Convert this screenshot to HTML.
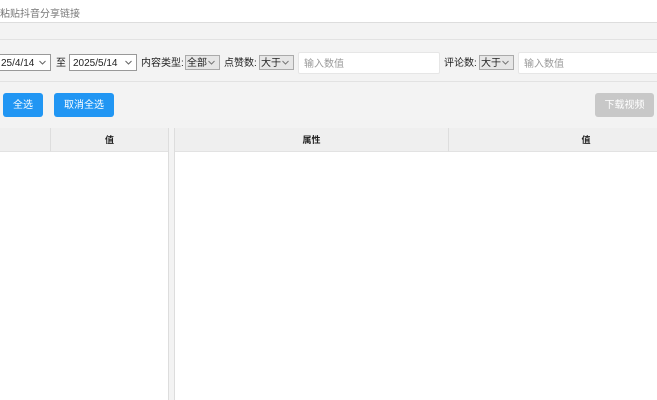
<!DOCTYPE html>
<html><head><meta charset="utf-8"><style>
*{box-sizing:border-box;margin:0;padding:0}
body{width:657px;height:400px;overflow:hidden;background:#f3f3f3;position:relative;font-family:"Liberation Sans","Noto Sans CJK SC",sans-serif;font-size:10px;color:#222}
.a{position:absolute}
.inp{position:absolute;background:#fff;border:1px solid #999;height:17px;top:54px;font-size:10px;line-height:17px;padding-left:3px}
.sel{position:absolute;background:#e6e6e6;border:1px solid #aaa;height:15px;top:55px;font-size:10px;line-height:15px;padding-left:1px}
.chev{position:absolute;right:4px;top:5px;width:7px;height:5px}
.txt{position:absolute;background:#fff;border:1px solid #e6e6e6;border-radius:2px;height:22px;top:52px;color:#999;font-size:10px;line-height:23px;padding-left:5px}
.lbl{position:absolute;top:57px;font-size:10px;line-height:14px}
.btn{position:absolute;top:93px;height:24px;border-radius:3px;color:#fff;font-size:10px;line-height:26px;text-align:center}
.hd{position:absolute;top:128px;height:24px;background:#efefef;border-bottom:1px solid #e2e2e2;font-weight:bold;font-size:9px;line-height:25px;text-align:center}
</style></head><body>
<div class="a" style="left:0;top:0;width:657px;height:23px;background:#fff;border-bottom:1px solid #ddd"></div>
<div class="a" style="left:0;top:5px;color:#777;font-size:10px">粘贴抖音分享链接</div>
<div class="a" style="left:0;top:39px;width:657px;height:1px;background:#e2e2e2"></div>
<div class="a" style="left:0;top:81px;width:657px;height:1px;background:#e2e2e2"></div>
<div class="inp" style="left:-3px;width:54px">25/4/14<svg class="chev" viewBox="0 0 7 5"><path d="M.5 1L3.5 4L6.5 1" fill="none" stroke="#666"/></svg></div>
<div class="lbl" style="left:56px">至</div>
<div class="inp" style="left:69px;width:68px">2025/5/14<svg class="chev" viewBox="0 0 7 5"><path d="M.5 1L3.5 4L6.5 1" fill="none" stroke="#666"/></svg></div>
<div class="lbl" style="left:141px">内容类型:</div>
<div class="sel" style="left:185px;width:35px">全部<svg class="chev" style="top:4px" viewBox="0 0 7 5"><path d="M.5 1L3.5 4L6.5 1" fill="none" stroke="#777"/></svg></div>
<div class="lbl" style="left:224px">点赞数:</div>
<div class="sel" style="left:259px;width:35px">大于<svg class="chev" style="top:4px" viewBox="0 0 7 5"><path d="M.5 1L3.5 4L6.5 1" fill="none" stroke="#777"/></svg></div>
<div class="txt" style="left:298px;width:142px">输入数值</div>
<div class="lbl" style="left:444px">评论数:</div>
<div class="sel" style="left:479px;width:35px">大于<svg class="chev" style="top:4px" viewBox="0 0 7 5"><path d="M.5 1L3.5 4L6.5 1" fill="none" stroke="#777"/></svg></div>
<div class="txt" style="left:518px;width:145px">输入数值</div>
<div class="btn" style="left:3px;width:40px;background:#2196f3">全选</div>
<div class="btn" style="left:54px;width:60px;background:#2196f3">取消全选</div>
<div class="btn" style="left:595px;width:59px;background:#c8c8c8">下载视频</div>
<div class="a" style="left:0;top:128px;width:169px;height:272px;background:#fff;border-right:1px solid #ddd"></div>
<div class="a" style="left:174px;top:128px;width:483px;height:272px;background:#fff;border-left:1px solid #ddd"></div>
<div class="hd" style="left:0;width:51px;border-right:1px solid #ddd"></div>
<div class="hd" style="left:51px;width:117px">值</div>
<div class="hd" style="left:175px;width:274px;border-right:1px solid #ddd">属性</div>
<div class="hd" style="left:449px;width:274px">值</div>
</body></html>
